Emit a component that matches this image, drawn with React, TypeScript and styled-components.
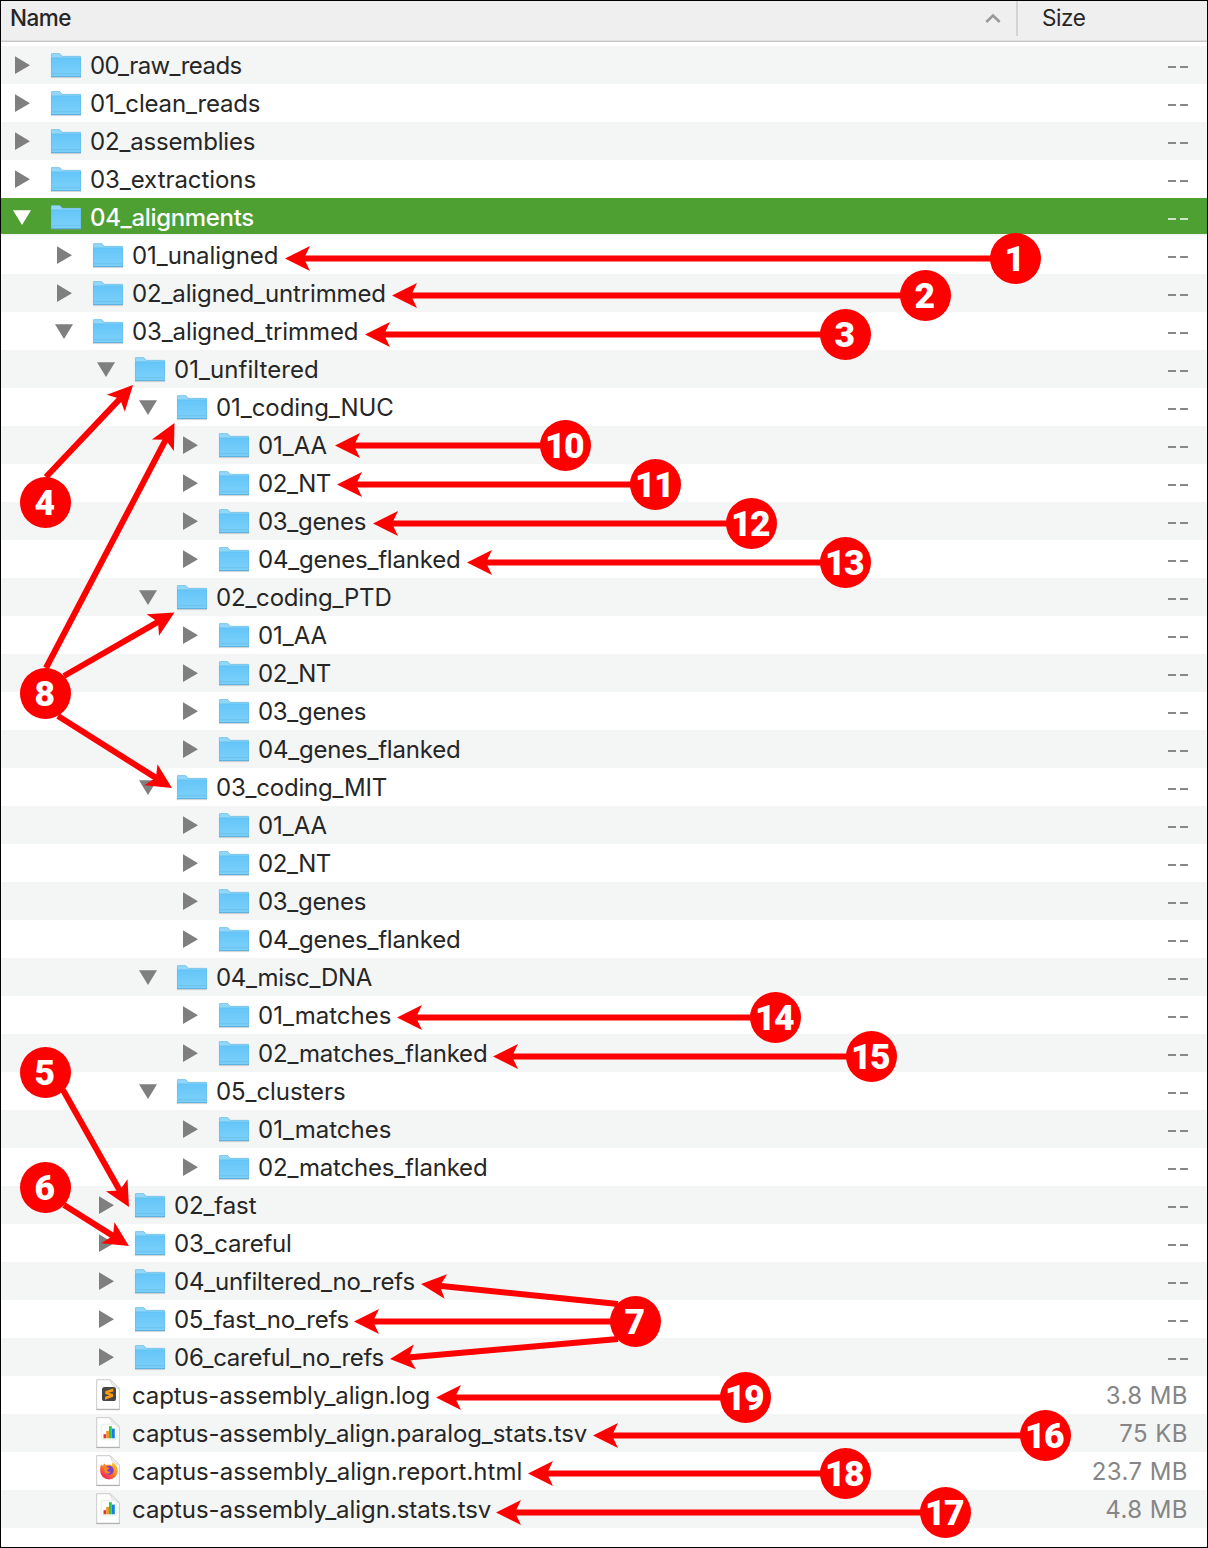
import React from "react";
import styled, { createGlobalStyle } from "styled-components";

const Global = createGlobalStyle`
  *{box-sizing:border-box}
  body{margin:0;background:#fff}
`;

const Frame = styled.main`
  position: relative;
  display: flex;
  flex-direction: column;
  width: 1208px;
  height: 1548px;
  border: 1px solid #000;
  background: #fff;
  overflow: hidden;
  font-family: Inter, "Liberation Sans", sans-serif;
  font-size: 24px;
  color: #262626;
`;

const Defs = styled.svg`
  position: absolute;
`;

const Header = styled.header`
  display: flex;
  flex: none;
  height: 41px;
  background: #efefef;
  border-bottom: 1px solid #c6c6c6;
  box-shadow: inset 0 -1px #dedede;
  line-height: 34px;
`;

const NameHead = styled.div`
  display: flex;
  align-items: center;
  justify-content: space-between;
  width: 1017px;
  height: 35px;
  padding: 0 15px 0 9px;
  border-right: 2px solid #d4d4d4;
  font-size: 22.5px;
  font-weight: 500;
  letter-spacing: -0.5px;
`;

const NameText = styled.span`
  padding-bottom: 2px;
`;

const SizeHead = styled.div`
  padding-left: 24px;
  font-size: 22.5px;
  line-height: 34px;
  letter-spacing: -0.4px;
`;

const Tree = styled.div`
  display: flex;
  flex-direction: column;
  margin-top: 4px;
`;

const Row = styled.div<{ $striped: boolean; $selected: boolean; $depth: number }>`
  display: flex;
  align-items: center;
  height: 38px;
  padding-left: ${(p) => 8 + p.$depth * 42}px;
  padding-right: 19px;
  background: ${(p) =>
    p.$selected
      ? "linear-gradient(#4ea033 0 36px, #f4f6f5 36px)"
      : p.$striped
      ? "#f4f5f5"
      : "#fff"};
  color: ${(p) => (p.$selected ? "#fff" : "#262626")};
  font-weight: ${(p) => (p.$selected ? 500 : 400)};
`;

const IconSlot = styled.span<{ $w: number }>`
  display: flex;
  flex: none;
  width: ${(p) => p.$w}px;
  height: 38px;
`;

const Label = styled.span<{ $track: number }>`
  flex: 1;
  line-height: 38px;
  padding-top: 2px;
  white-space: nowrap;
  letter-spacing: ${(p) => p.$track}px;
`;

const Size = styled.span`
  color: #868686;
  font-size: 24px;
  line-height: 38px;
  padding-top: 2px;
  letter-spacing: 0.45px;
`;

const Dashes = styled.span<{ $selected: boolean }>`
  display: flex;
  gap: 4px;
  margin-top: 4px;
  &::before,
  &::after {
    content: "";
    width: 8px;
    height: 2px;
    background: ${(p) => (p.$selected ? "#cfe5c8" : "#888")};
  }
`;

const Overlay = styled.svg`
  position: absolute;
  left: -1px;
  top: -1px;
`;

const Badge = styled.span<{ $x: number; $y: number }>`
  position: absolute;
  left: ${(p) => p.$x - 26.5}px;
  top: ${(p) => p.$y - 26.5}px;
  width: 51px;
  height: 51px;
  padding-right: 3px;
  border-radius: 50%;
  background: #f00;
  color: #fff;
  font: 900 35.5px/52px Roboto, "Liberation Sans", sans-serif;
  letter-spacing: -1.5px;
  text-align: center;
`;

type Kind = "closed" | "open" | "log" | "tsv" | "html";
type Item = [depth: number, kind: Kind, name: string, track: number, size?: string];

const items: Item[] = [
  [0, "closed", "00_raw_reads", -0.58],
  [0, "closed", "01_clean_reads", -0.17],
  [0, "closed", "02_assemblies", -0.17],
  [0, "closed", "03_extractions", -0.06],
  [0, "open", "04_alignments", -0.32],
  [1, "closed", "01_unaligned", -0.04],
  [1, "closed", "02_aligned_untrimmed", -0.13],
  [1, "open", "03_aligned_trimmed", -0.11],
  [2, "open", "01_unfiltered", 0.06],
  [3, "open", "01_coding_NUC", -0.06],
  [4, "closed", "01_AA", -0.07],
  [4, "closed", "02_NT", -0.45],
  [4, "closed", "03_genes", -0.3],
  [4, "closed", "04_genes_flanked", -0.21],
  [3, "open", "02_coding_PTD", -0.2],
  [4, "closed", "01_AA", -0.07],
  [4, "closed", "02_NT", -0.45],
  [4, "closed", "03_genes", -0.3],
  [4, "closed", "04_genes_flanked", -0.21],
  [3, "open", "03_coding_MIT", -0.22],
  [4, "closed", "01_AA", -0.07],
  [4, "closed", "02_NT", -0.45],
  [4, "closed", "03_genes", -0.3],
  [4, "closed", "04_genes_flanked", -0.21],
  [3, "open", "04_misc_DNA", -0.3],
  [4, "closed", "01_matches", 0],
  [4, "closed", "02_matches_flanked", -0.19],
  [3, "open", "05_clusters", -0.08],
  [4, "closed", "01_matches", 0],
  [4, "closed", "02_matches_flanked", -0.19],
  [2, "closed", "02_fast", -0.12],
  [2, "closed", "03_careful", -0.22],
  [2, "closed", "04_unfiltered_no_refs", -0.22],
  [2, "closed", "05_fast_no_refs", -0.27],
  [2, "closed", "06_careful_no_refs", -0.25],
  [1, "log", "captus-assembly_align.log", -0.1, "3.8 MB"],
  [1, "tsv", "captus-assembly_align.paralog_stats.tsv", -0.06, "75 KB"],
  [1, "html", "captus-assembly_align.report.html", -0.01, "23.7 MB"],
  [1, "tsv", "captus-assembly_align.stats.tsv", -0.05, "4.8 MB"],
];

const badges: [string, number, number][] = [
  ["1", 1015.5, 258.5],
  ["2", 925.5, 295.5],
  ["3", 845.5, 334.5],
  ["4", 45.5, 502.5],
  ["5", 45.5, 1072.5],
  ["6", 45.5, 1187.5],
  ["7", 635.5, 1321.5],
  ["8", 45.5, 693.5],
  ["10", 565.5, 445.5],
  ["11", 655.5, 484.5],
  ["12", 751.5, 523.5],
  ["13", 845.5, 562.5],
  ["14", 775.5, 1017.5],
  ["15", 871.5, 1056.5],
  ["16", 1045.5, 1435.5],
  ["17", 945.5, 1512.5],
  ["18", 845.5, 1473.5],
  ["19", 745.5, 1397.5],
];

/* start x, start y, tip x, tip y */
const arrows: number[][] = [
  [1000, 258.5, 285, 258.5],
  [910, 295.5, 392, 295.5],
  [830, 334.5, 365, 334.5],
  [46, 477, 133, 385],
  [46, 668, 174.5, 423],
  [64, 676, 174.5, 612.5],
  [58, 716, 172, 788],
  [550, 445.5, 335, 445.5],
  [640, 484.5, 337, 484.5],
  [736, 523.5, 373, 523.5],
  [830, 562.5, 467, 562.5],
  [760, 1017.5, 397, 1017.5],
  [856, 1056.5, 493, 1056.5],
  [63, 1090, 129, 1207],
  [64, 1205, 129, 1246],
  [618, 1304, 421, 1284],
  [620, 1321.5, 354, 1321.5],
  [618, 1339, 390, 1359],
  [730, 1397.5, 436, 1397.5],
  [1030, 1435.5, 593, 1435.5],
  [830, 1473.5, 528, 1473.5],
  [930, 1512.5, 496, 1512.5],
];

function Arrow({ a }: { a: number[] }) {
  const [x1, y1, x2, y2] = a;
  const len = Math.hypot(x2 - x1, y2 - y1);
  const deg = (Math.atan2(y1 - y2, x1 - x2) * 180) / Math.PI;
  return (
    <g transform={`translate(${x2} ${y2}) rotate(${deg})`} fill="#f00">
      <path d="M0 0 25-12.4 19 0 25 12.4Z" />
      <rect x="18" y="-3" width={len - 18} height="6" />
    </g>
  );
}

function Triangle({ open, color }: { open: boolean; color: string }) {
  return (
    <svg width="30" height="38">
      <path d={open ? "M4 12.3H22L13 27Z" : "M6 10.3V28L21 19.2Z"} fill={color} />
    </svg>
  );
}

function Folder() {
  return (
    <svg width="34" height="38">
      <path d="M1 31.3H31" stroke="#8a9ba3" strokeOpacity=".4" strokeWidth="1.6" />
      <path d="M1 8.2Q1 7.2 2 7.2H9Q10 7.2 10.8 8.2L12.4 9.9H30Q31 9.9 31 10.9V30.8H1Z" fill="#93d8fb" />
      <path d="M1 11.6H31V30.5H1Z" fill="url(#folderBody)" />
      <path d="M1.4 8V30.5M30.6 10.5V30.5" stroke="#5fb4df" strokeOpacity=".5" strokeWidth=".8" />
      <path d="M1.3 7.6H9.6L12.2 10.3H30.5" fill="none" stroke="#5fb4df" strokeOpacity=".55" strokeWidth=".9" />
      <path d="M1.5 12H30.5" stroke="#5cb9e7" strokeOpacity=".5" strokeWidth=".8" />
      <path d="M1.5 27.6H30.5" stroke="#67bee9" strokeWidth=".7" />
      <path d="M1 30.5H31" stroke="#58aedb" strokeWidth=".9" />
    </svg>
  );
}

function FileIcon({ kind }: { kind: Kind }) {
  return (
    <svg width="34" height="38">
      <path d="M4.7 3.7H18L27.4 12.8V33.2H4.7Z" fill="#fff" stroke="#c4c4c4" strokeWidth=".9" />
      <path d="M4.3 33.6H27.8" stroke="#a6a6a6" strokeWidth=".9" />
      <path d="M18 3.7Q19.5 11 27.4 12.8Z" fill="#f4f4f4" stroke="#cfcfcf" strokeWidth=".8" />
      {kind === "log" && (
        <>
          <rect x="10" y="11" width="14" height="14" rx="2.6" fill="#464646" />
          <path
            d="M21.2 12.6V15.4L16.8 16.8 21 18V20.8L13 23.7V20.8L17.4 19.3 13.2 18V15.2Z"
            fill="#ff9a0a"
          />
        </>
      )}
      {kind === "tsv" && (
        <>
          <rect x="9.2" y="10.2" width="15.6" height="15.6" rx="3" fill="#fff" stroke="#e3eee5" />
          <path d="M12.8 20.2V24.3" stroke="#e0343a" strokeWidth="2.6" />
          <path d="M15.6 17V24.3" stroke="#f6902c" strokeWidth="2.8" />
          <path d="M18.4 12.2V24.3" stroke="#2bc840" strokeWidth="2.9" />
          <path d="M21.4 14.6V24.3" stroke="#1b7ce8" strokeWidth="2.8" />
        </>
      )}
      {kind === "html" && (
        <>
          <path
            d="M9 12.5 11 14 12 11.2 14 13.3Q18 11.5 20 14L20.5 10.2Q26 13.5 25.8 19A8.8 8.4 0 0 1 8.2 19Q7.8 15.5 9 12.5Z"
            fill="url(#fox)"
          />
          <circle cx="17.2" cy="18.2" r="4.5" fill="#7b3fd0" />
          <path d="M11.5 15.6Q14.8 14 17.5 16.2L15 18Q15 20.4 19 19.6 17 23 13.2 21Z" fill="#ff8a1d" />
        </>
      )}
    </svg>
  );
}

export default function App() {
  return (
    <>
      <Global />
      <Frame>
        <Defs width="0" height="0">
          <defs>
            <linearGradient id="folderBody" x2="0" y2="1">
              <stop stopColor="#64c6f8" />
              <stop offset="1" stopColor="#7cd0fa" />
            </linearGradient>
            <linearGradient id="fox" x1="1" y1="0" x2="0.2" y2="1">
              <stop stopColor="#ffd52e" />
              <stop offset=".5" stopColor="#ff8326" />
              <stop offset="1" stopColor="#f4185f" />
            </linearGradient>
          </defs>
        </Defs>
        <Header>
          <NameHead>
            <NameText>Name</NameText>
            <svg width="16" height="12">
              <path d="M1.3 9 8 2.6 14.7 9" fill="none" stroke="#999" strokeWidth="2.5" />
            </svg>
          </NameHead>
          <SizeHead>Size</SizeHead>
        </Header>
        <Tree>
          {items.map(([depth, kind, name, track, size], i) => {
            const folder = kind === "open" || kind === "closed";
            const selected = i === 4;
            return (
              <Row key={i} $striped={i % 2 === 0} $selected={selected} $depth={depth}>
                <IconSlot $w={41}>
                  {folder && <Triangle open={kind === "open"} color={selected ? "#fff" : "#7f7f7f"} />}
                </IconSlot>
                <IconSlot $w={40}>{folder ? <Folder /> : <FileIcon kind={kind} />}</IconSlot>
                <Label $track={track}>{name}</Label>
                {size ? <Size>{size}</Size> : <Dashes $selected={selected} />}
              </Row>
            );
          })}
        </Tree>
        <Overlay width="1208" height="1548">
          {arrows.map((a, i) => (
            <Arrow key={i} a={a} />
          ))}
        </Overlay>
        {badges.map(([n, x, y]) => (
          <Badge key={n} $x={x} $y={y}>
            {n}
          </Badge>
        ))}
      </Frame>
    </>
  );
}
